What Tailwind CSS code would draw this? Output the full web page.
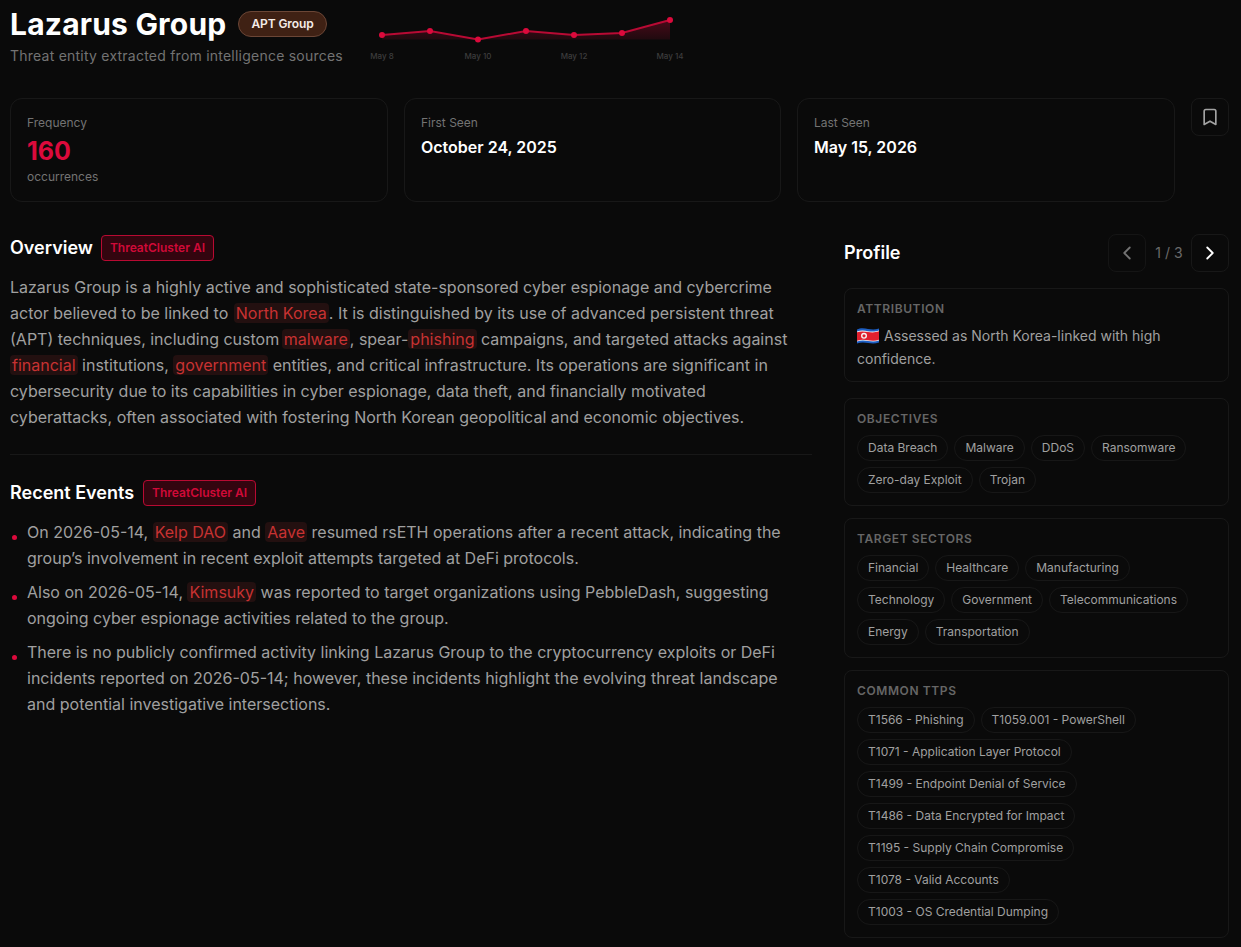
<!DOCTYPE html>
<html><head><meta charset="utf-8"><script src="https://cdn.jsdelivr.net/npm/@tailwindcss/browser@4"></script></head>
<body class="bg-[#0a0a0a] font-['Inter',sans-serif] text-white overflow-hidden">
<div class="w-[1241px] h-[947px] overflow-hidden pl-[10px] pr-[12px]">
  <header class="flex h-[98px] items-start">
    <div class="w-[360px] shrink-0">
      <div class="flex items-center h-[48px] gap-3">
        <h1 class="text-[30px] leading-[36px] font-bold tracking-[0.2px] whitespace-nowrap">Lazarus Group</h1>
        <span class="h-[26px] px-[12px] rounded-full bg-[#3f2114] border border-[#6b4636] text-xs font-semibold tracking-[-0.1px] leading-[24px] text-[#f5ece8] whitespace-nowrap">APT Group</span>
      </div>
      <p class="text-sm leading-[20px] tracking-[0.23px] text-[#737373] whitespace-nowrap -mt-[2px]">Threat entity extracted from intelligence sources</p>
    </div>
    <svg class="shrink-0" width="340" height="70" viewBox="0 0 340 70">
      <defs><linearGradient id="chartfill" x1="0" y1="20" x2="0" y2="40" gradientUnits="userSpaceOnUse"><stop offset="0" stop-color="#dc0a3c" stop-opacity="0.3"/><stop offset="1" stop-color="#dc0a3c" stop-opacity="0.1"/></linearGradient></defs>
      <path d="M12 35L60 31L108 39.5L156 31L204 35L252 33L300 20V39.5H12Z" fill="url(#chartfill)"/>
      <path d="M12 35L60 31L108 39.5L156 31L204 35L252 33L300 20" fill="none" stroke="#b80a34" stroke-width="2"/>
      <g fill="#dc0a3c"><circle cx="12" cy="35" r="3"/><circle cx="60" cy="31" r="3"/><circle cx="108" cy="39.5" r="3"/><circle cx="156" cy="31" r="3"/><circle cx="204" cy="35" r="3"/><circle cx="252" cy="33" r="3"/><circle cx="300" cy="20" r="3"/></g>
      <g fill="#3d3d3d" font-size="8" font-weight="500" text-anchor="middle" font-family="Inter, sans-serif"><text x="12" y="59">May 8</text><text x="108" y="59">May 10</text><text x="204" y="59">May 12</text><text x="300" y="59">May 14</text></g>
    </svg>
  </header>

  <section class="flex gap-4 items-start">
    <div class="w-[378px] h-[104px] rounded-xl border border-[#181818] pt-4 px-4">
      <p class="text-xs leading-4 text-[#737373]">Frequency</p>
      <p class="text-[25px] leading-[24px] font-bold text-[#dc0a3c] mt-[8px]">160</p>
      <p class="text-xs leading-4 text-[#737373] mt-[6px]">occurrences</p>
    </div>
    <div class="w-[377px] h-[104px] rounded-xl border border-[#181818] pt-4 px-4">
      <p class="text-xs leading-4 text-[#737373]">First Seen</p>
      <p class="text-base leading-6 font-semibold mt-[4px]">October 24, 2025</p>
    </div>
    <div class="w-[378px] h-[104px] rounded-xl border border-[#181818] pt-4 px-4">
      <p class="text-xs leading-4 text-[#737373]">Last Seen</p>
      <p class="text-base leading-6 font-semibold mt-[4px]">May 15, 2026</p>
    </div>
    <button class="w-[38px] h-[38px] rounded-lg border border-[#181818] flex items-center justify-center text-[#a3a3a3]">
      <svg width="20" height="20" viewBox="0 0 24 24" fill="none" stroke="currentColor" stroke-width="2" stroke-linecap="round" stroke-linejoin="round"><path d="M19 21l-7-4-7 4V5a2 2 0 0 1 2-2h10a2 2 0 0 1 2 2z"/></svg>
    </button>
  </section>

  <main class="flex mt-[32px]">
    <div class="w-[802px] shrink-0 pt-[1px]">
      <div class="flex items-center gap-2 h-[26px]">
        <h2 class="text-lg leading-[26px] font-semibold">Overview</h2>
        <span class="h-[26px] px-2 rounded border border-[#b80a32] bg-[#33050f] text-xs font-semibold leading-[24px] text-[#d00a38]">ThreatCluster AI</span>
      </div>
      <p class="mt-[13px] text-base leading-[26px] text-[#a0a0a0]">Lazarus Group is a highly active and sophisticated state-sponsored cyber espionage and cybercrime actor believed to be linked to <span class="bg-[#231010] text-[#c83232] rounded-sm px-0.5 ml-px">North Korea</span>. It is distinguished by its use of advanced persistent threat (APT) techniques, including custom <span class="bg-[#231010] text-[#c83232] rounded-sm px-0.5 -ml-[2px]">malware</span>, spear-<span class="bg-[#231010] text-[#c83232] rounded-sm px-0.5">phishing</span> campaigns, and targeted attacks against <span class="bg-[#231010] text-[#c83232] rounded-sm px-0.5">financial</span> institutions, <span class="bg-[#231010] text-[#c83232] rounded-sm px-0.5">government</span> entities, and critical infrastructure. Its operations are significant in cybersecurity due to its capabilities in cyber espionage, data theft, and financially motivated cyberattacks, often associated with fostering North Korean geopolitical and economic objectives.</p>
      <div class="h-px bg-[#181818] mt-[24px]"></div>
      <div class="flex items-center gap-[9px] h-[26px] mt-[25px]">
        <h2 class="text-lg leading-[26px] font-semibold">Recent Events</h2>
        <span class="h-[26px] px-2 rounded border border-[#b80a32] bg-[#33050f] text-xs font-semibold leading-[24px] text-[#d00a38]">ThreatCluster AI</span>
      </div>
      <ul class="mt-[13px] pr-[5px] flex flex-col gap-2 text-base leading-[26px] text-[#a0a0a0]">
        <li class="flex"><span class="w-[5px] h-[5px] mt-[16px] ml-[2px] mr-[10px] rounded-full bg-[#dc0a3c] shrink-0"></span><span>On 2026-05-14, <span class="bg-[#231010] text-[#c83232] rounded-sm px-0.5">Kelp DAO</span> and <span class="bg-[#231010] text-[#c83232] rounded-sm px-0.5">Aave</span> resumed rsETH operations after a recent attack, indicating the group’s involvement in recent exploit attempts targeted at DeFi protocols.</span></li>
        <li class="flex"><span class="w-[5px] h-[5px] mt-[16px] ml-[2px] mr-[10px] rounded-full bg-[#dc0a3c] shrink-0"></span><span>Also on 2026-05-14, <span class="bg-[#231010] text-[#c83232] rounded-sm px-0.5">Kimsuky</span> was reported to target organizations using PebbleDash, suggesting ongoing cyber espionage activities related to the group.</span></li>
        <li class="flex"><span class="w-[5px] h-[5px] mt-[16px] ml-[2px] mr-[10px] rounded-full bg-[#dc0a3c] shrink-0"></span><span>There is no publicly confirmed activity linking Lazarus Group to the cryptocurrency exploits or DeFi incidents reported on 2026-05-14; however, these incidents highlight the evolving threat landscape and potential investigative intersections.</span></li>
      </ul>
    </div>

    <aside class="w-[385px] shrink-0 ml-[32px]">
      <div class="flex items-center justify-between h-[38px]">
        <h2 class="text-lg font-semibold">Profile</h2>
        <div class="flex items-center">
          <button class="w-[38px] h-[38px] rounded-lg border border-[#151515] flex items-center justify-center text-[#737373]"><svg width="22" height="22" viewBox="0 0 24 24" fill="none" stroke="currentColor" stroke-width="2" stroke-linecap="round" stroke-linejoin="round"><path d="M15 18l-6-6 6-6"/></svg></button>
          <span class="w-[45px] pl-px text-center text-sm text-[#6b6b6b]">1 / 3</span>
          <button class="w-[38px] h-[38px] rounded-lg border border-[#181818] flex items-center justify-center text-white"><svg width="22" height="22" viewBox="0 0 24 24" fill="none" stroke="currentColor" stroke-width="2" stroke-linecap="round" stroke-linejoin="round"><path d="M9 18l6-6-6-6"/></svg></button>
        </div>
      </div>
      <div class="mt-4 rounded-lg border border-[#181818] px-3 pt-3 pb-[10.5px]">
        <h3 class="text-xs leading-4 font-semibold tracking-wider uppercase text-[#666666] mb-2">Attribution</h3>
        <p class="text-sm leading-[22.75px] text-[#a0a0a0]"><svg class="inline-block align-[-3px] mr-[5px]" width="22" height="16" viewBox="0 0 22 16"><path d="M0 1.5C4-.5 8 .5 11 1s7 1 11-.5v14c-4 1.5-8 1-11 .5s-7-1-11 .5z" fill="#1d5fc4"/><path d="M0 3.5C4 2 8 2.7 11 3.2s7 .8 11-.7v10c-4 1.5-8 1-11 .5s-7-1-11 .5z" fill="#f2f2f2"/><path d="M0 4.3C4 2.8 8 3.5 11 4s7 .8 11-.7v8.4c-4 1.5-8 1-11 .5s-7-1-11 .5z" fill="#e0202e"/><circle cx="7" cy="7.8" r="3" fill="#f5f5f5"/><circle cx="7" cy="7.8" r="1.6" fill="#e0202e"/></svg>Assessed as North Korea-linked with high confidence.</p>
      </div>
      <div class="mt-4 rounded-lg border border-[#181818] p-3">
        <h3 class="text-xs leading-4 font-semibold tracking-wider uppercase text-[#666666] mb-2">Objectives</h3>
        <div class="flex flex-wrap gap-[6px] text-xs leading-[24px] text-[#a0a0a0] [&>span]:h-[26px] [&>span]:px-[10px] [&>span]:rounded-full [&>span]:border [&>span]:border-[#171717]"><span>Data Breach</span><span>Malware</span><span>DDoS</span><span>Ransomware</span><span>Zero-day Exploit</span><span>Trojan</span></div>
      </div>
      <div class="mt-3 rounded-lg border border-[#181818] p-3">
        <h3 class="text-xs leading-4 font-semibold tracking-wider uppercase text-[#666666] mb-2">Target Sectors</h3>
        <div class="flex flex-wrap gap-[6px] text-xs leading-[24px] text-[#a0a0a0] [&>span]:h-[26px] [&>span]:px-[10px] [&>span]:rounded-full [&>span]:border [&>span]:border-[#171717]"><span>Financial</span><span>Healthcare</span><span>Manufacturing</span><span>Technology</span><span>Government</span><span>Telecommunications</span><span>Energy</span><span>Transportation</span></div>
      </div>
      <div class="mt-3 rounded-lg border border-[#181818] p-3">
        <h3 class="text-xs leading-4 font-semibold tracking-wider uppercase text-[#666666] mb-2">Common TTPs</h3>
        <div class="flex flex-wrap gap-[6px] text-xs leading-[24px] text-[#a0a0a0] [&>span]:h-[26px] [&>span]:px-[10px] [&>span]:rounded-full [&>span]:border [&>span]:border-[#171717]"><span>T1566 - Phishing</span><span>T1059.001 - PowerShell</span><span>T1071 - Application Layer Protocol</span><span>T1499 - Endpoint Denial of Service</span><span>T1486 - Data Encrypted for Impact</span><span>T1195 - Supply Chain Compromise</span><span>T1078 - Valid Accounts</span><span>T1003 - OS Credential Dumping</span></div>
      </div>
    </aside>
  </main>
</div>
</body></html>
